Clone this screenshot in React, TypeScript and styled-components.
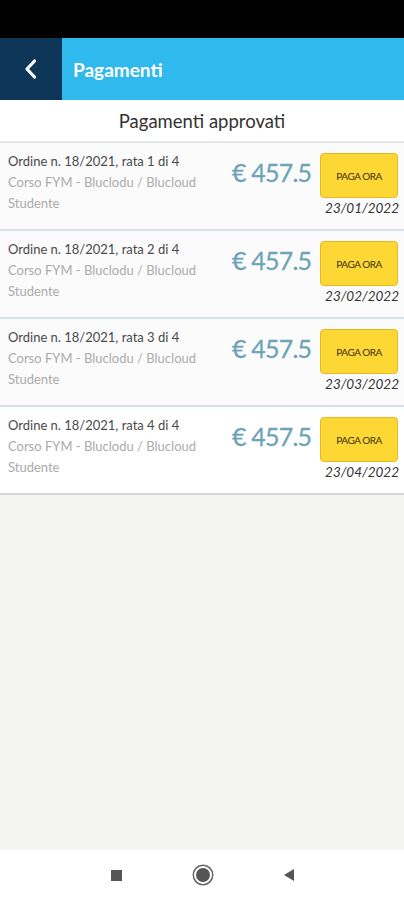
import React from 'react';
import styled, { createGlobalStyle } from 'styled-components';

const GlobalStyle = createGlobalStyle`
  html, body {
    margin: 0;
    padding: 0;
    background: #f4f4f2;
    font-family: Lato, 'Open Sans', sans-serif;
  }
`;

const Screen = styled.div`
  width: 404px;
  height: 900px;
  display: flex;
  flex-direction: column;
  background: #f4f4f2;
`;

const StatusBar = styled.div`
  height: 38px;
  background: #000;
`;

const Header = styled.div`
  height: 62px;
  display: flex;
  background: #2fb9ec;
`;

const BackButton = styled.div`
  width: 62px;
  background: #0e3658;
  display: flex;
  align-items: center;
  justify-content: center;
`;

const Title = styled.div`
  display: flex;
  align-items: center;
  padding-left: 11px;
  color: #fff;
  font-size: 19px;
  font-weight: 700;
`;

const SubHeader = styled.div`
  height: 41px;
  background: #fff;
  display: flex;
  align-items: center;
  justify-content: center;
  color: #333;
  font-size: 18.5px;
  border-bottom: 2px solid #e2e6e8;
`;

const Row = styled.div<{ last?: boolean }>`
  height: 86px;
  display: flex;
  background: ${(p) => (p.last ? '#fff' : '#fbfbfb')};
  border-bottom: 2px solid ${(p) => (p.last ? '#d4d6d6' : '#d6e1e7')};
`;

const Info = styled.div`
  flex: 1;
  padding: 8px 0 0 8px;
  display: flex;
  flex-direction: column;
  font-size: 13px;
  line-height: 21px;
`;

const OrderText = styled.div`
  color: #4a4a4a;
`;

const CourseText = styled.div`
  color: #ababab;
`;

const Price = styled.div`
  padding-top: 14px;
  width: 88px;
  font-size: 25px;
  letter-spacing: -0.8px;
  color: #6ea3b8;
  -webkit-text-stroke: 0.3px #6ea3b8;
  white-space: nowrap;
`;

const Actions = styled.div`
  width: 84px;
  padding-top: 10px;
  display: flex;
  flex-direction: column;
  align-items: flex-end;
`;

const PayButton = styled.button`
  width: 78px;
  height: 45px;
  margin-right: 6px;
  background: #fdd835;
  border: 1.5px solid #e5b91f;
  border-radius: 4px;
  color: #3a2e0c;
  font-family: Lato, sans-serif;
  font-size: 10px;
  letter-spacing: -0.5px;
  padding: 0;
`;

const DateText = styled.div`
  margin-top: 2px;
  margin-right: 5px;
  font-size: 13.5px;
  font-style: italic;
  color: #333;
`;

const Spacer = styled.div`
  flex: 1;
`;

const NavBar = styled.div`
  height: 50px;
  background: #fff;
  display: flex;
  align-items: center;
  justify-content: center;
  gap: 72px;
`;

const NavSquare = styled.div`
  width: 11px;
  height: 11px;
  background: #555;
`;

const NavHome = styled.div`
  width: 14px;
  height: 14px;
  border-radius: 50%;
  background: #555;
  border: 2px solid #fff;
  box-shadow: 0 0 0 1.5px #666;
`;

const NavBack = styled.div`
  width: 0;
  height: 0;
  border-top: 6.5px solid transparent;
  border-bottom: 6.5px solid transparent;
  border-right: 10px solid #555;
`;

const rows = [
  { n: 1, date: '23/01/2022' },
  { n: 2, date: '23/02/2022' },
  { n: 3, date: '23/03/2022' },
  { n: 4, date: '23/04/2022' },
];

export default function App() {
  return (
    <Screen>
      <GlobalStyle />
      <StatusBar />
      <Header>
        <BackButton>
          <svg width="16" height="22" viewBox="0 0 16 22">
            <path d="M11.5 3 L4 11 L11.5 19" stroke="#fff" strokeWidth="3.2" fill="none" strokeLinecap="round" strokeLinejoin="round" />
          </svg>
        </BackButton>
        <Title>Pagamenti</Title>
      </Header>
      <SubHeader>Pagamenti approvati</SubHeader>
      {rows.map((r, i) => (
        <Row key={r.n} last={i === rows.length - 1}>
          <Info>
            <OrderText>Ordine n. 18/2021, rata {r.n} di 4</OrderText>
            <CourseText>Corso FYM - Bluclodu / Blucloud</CourseText>
            <CourseText>Studente</CourseText>
          </Info>
          <Price>€ 457.5</Price>
          <Actions>
            <PayButton>PAGA ORA</PayButton>
            <DateText>{r.date}</DateText>
          </Actions>
        </Row>
      ))}
      <Spacer />
      <NavBar>
        <NavSquare />
        <NavHome />
        <NavBack />
      </NavBar>
    </Screen>
  );
}
